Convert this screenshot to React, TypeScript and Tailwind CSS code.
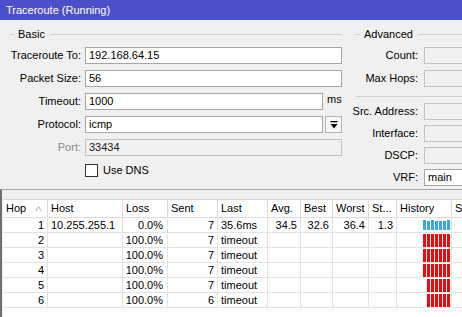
import React from "react";

const FIELD = "h-[17px] border border-[#a5a5a5] bg-white px-[3px] flex items-center leading-none";
const DIS = "h-[17px] border border-[#c3c3c3] bg-[#f0f0f0] px-[3px] flex items-center leading-none";

function Legend({ title, lineEnd = true }: { title: string; lineEnd?: boolean }) {
  return (
    <div className="h-[14px] flex items-center">
      <div className="w-[5px] ml-[5px] border-t border-[#cfcfcf]" />
      <span className="ml-[4px] leading-none">{title}</span>
      {lineEnd && <div className="flex-1 ml-[5px] border-t border-[#cfcfcf]" />}
    </div>
  );
}

function Row({ label, children, labelClass = "", labelW = "w-[77px]", gap = "ml-[4px]" }: { label: string; children: React.ReactNode; labelClass?: string; labelW?: string; gap?: string }) {
  return (
    <div className="h-[17px] flex items-center">
      <div className={`${labelW} shrink-0 text-right whitespace-nowrap leading-none ${labelClass}`}>{label}</div>
      <div className={`${gap} flex-1 min-w-0 flex items-center`}>{children}</div>
    </div>
  );
}

const COLS = "grid grid-cols-[45px_75px_45px_50px_50px_33px_32px_36px_28px_55px_40px]";

type R = { hop: string; host: string; loss: string; sent: string; last: string; avg: string; best: string; worst: string; st: string; bars: number; blue: boolean };

const rows: R[] = [
  { hop: "1", host: "10.255.255.1", loss: "0.0%", sent: "7", last: "35.6ms", avg: "34.5", best: "32.6", worst: "36.4", st: "1.3", bars: 7, blue: true },
  { hop: "2", host: "", loss: "100.0%", sent: "7", last: "timeout", avg: "", best: "", worst: "", st: "", bars: 7, blue: false },
  { hop: "3", host: "", loss: "100.0%", sent: "7", last: "timeout", avg: "", best: "", worst: "", st: "", bars: 7, blue: false },
  { hop: "4", host: "", loss: "100.0%", sent: "7", last: "timeout", avg: "", best: "", worst: "", st: "", bars: 7, blue: false },
  { hop: "5", host: "", loss: "100.0%", sent: "7", last: "timeout", avg: "", best: "", worst: "", st: "", bars: 6, blue: false },
  { hop: "6", host: "", loss: "100.0%", sent: "6", last: "timeout", avg: "", best: "", worst: "", st: "", bars: 6, blue: false },
];

const blueH = [10, 9, 10, 9, 9, 9, 10];

export default function App() {
  const cell = "h-[15px] border-r border-b border-[#e3e3e3] flex items-center leading-none whitespace-nowrap overflow-hidden";
  const hcell = "h-[18px] border-r border-b border-[#dcdcdc] flex items-center pl-[3px] leading-none whitespace-nowrap overflow-hidden";
  return (
    <div className="w-[462px] h-[317px] overflow-hidden bg-[#f0f0f0] text-[11px] text-black flex flex-col font-['Liberation_Sans',Arial,sans-serif]">
      <div className="h-[20px] shrink-0 bg-[#4b50c8] text-white flex items-center pl-[6px] leading-none">Traceroute (Running)</div>

      <div className="h-[169px] shrink-0 flex">
        {/* Basic */}
        <div className="w-[346px] shrink-0 pl-[4px] pr-[4px] pt-[7px] flex flex-col gap-[6px]">
          <Legend title="Basic" />
          <Row label="Traceroute To:">
            <div className={`${FIELD} flex-1`}>192.168.64.15</div>
          </Row>
          <Row label="Packet Size:">
            <div className={`${FIELD} flex-1`}>56</div>
          </Row>
          <Row label="Timeout:">
            <div className={`${FIELD} w-[238px]`}>1000</div>
            <span className="ml-[4px] leading-none -mt-[4px]">ms</span>
          </Row>
          <Row label="Protocol:">
            <div className={`${FIELD} w-[238px]`}>icmp</div>
            <div className="ml-[2px] w-[17px] h-[17px] border border-[#b4b4b4] bg-[#f7f7f7] flex items-center justify-center">
              <svg width="8" height="8" viewBox="0 0 8 8">
                <rect x="0.5" y="0" width="7" height="1.3" fill="#000" />
                <polygon points="0.5,3 7.5,3 4,7.5" fill="#000" />
              </svg>
            </div>
          </Row>
          <Row label="Port:" labelClass="text-[#8a8a8a]">
            <div className={`${DIS} flex-1 text-[#222]`}>33434</div>
          </Row>
          <Row label="">
            <div className="w-[13px] h-[13px] border border-[#333] bg-white" />
            <span className="ml-[5px] leading-none">Use DNS</span>
          </Row>
        </div>

        {/* Advanced */}
        <div className="ml-[4px] w-[140px] shrink-0 pt-[7px] flex flex-col">
          <Legend title="Advanced" />
          <div className="mt-[6px]">
            <Row label="Count:" labelW="w-[68px]" gap="ml-[6px]">
              <div className={`${DIS} w-[60px]`} />
            </Row>
          </div>
          <div className="mt-[6px]">
            <Row label="Max Hops:" labelW="w-[68px]" gap="ml-[6px]">
              <div className={`${DIS} w-[60px]`} />
            </Row>
          </div>
          <div className="mt-[9px] ml-[6px] border-t border-[#cfcfcf]" />
          <div className="mt-[6px]">
            <Row label="Src. Address:" labelW="w-[68px]" gap="ml-[6px]">
              <div className={`${DIS} w-[60px]`} />
            </Row>
          </div>
          <div className="mt-[5px]">
            <Row label="Interface:" labelW="w-[68px]" gap="ml-[6px]">
              <div className={`${DIS} w-[60px]`} />
            </Row>
          </div>
          <div className="mt-[5px]">
            <Row label="DSCP:" labelW="w-[68px]" gap="ml-[6px]">
              <div className={`${DIS} w-[60px]`} />
            </Row>
          </div>
          <div className="mt-[5px]">
            <Row label="VRF:" labelW="w-[68px]" gap="ml-[6px]">
              <div className={`${FIELD} w-[60px]`}>main</div>
            </Row>
          </div>
        </div>
      </div>

      {/* Table panel */}
      <div className="flex-1 min-h-0 border-t border-[#a8a8a8] border-l-2 border-l-[#6f6f6f] pt-[9px] pl-[1px] flex flex-col">
        <div className="flex-1 bg-white border-t border-[#d6d6d6] overflow-hidden">
          <div className={COLS}>
            <div className={`${hcell} justify-between pr-[5px]`}>
              <span>Hop</span>
              <svg width="7" height="6" viewBox="0 0 7 6">
                <polyline points="0.5,5.5 3.5,0.5 6.5,5.5" fill="none" stroke="#b0b0b0" strokeWidth="1" />
              </svg>
            </div>
            {["Host", "Loss", "Sent", "Last", "Avg.", "Best", "Worst", "St...", "History", "S"].map((h) => (
              <div key={h} className={hcell}>{h}</div>
            ))}
            {rows.map((r) => (
              <React.Fragment key={r.hop}>
                <div className={`${cell} justify-end pr-[3px]`}>{r.hop}</div>
                <div className={`${cell} pl-[3px]`}>{r.host}</div>
                <div className={`${cell} justify-end pr-[4px]`}>{r.loss}</div>
                <div className={`${cell} justify-end pr-[3px]`}>{r.sent}</div>
                <div className={`${cell} pl-[3px]`}>{r.last}</div>
                <div className={`${cell} justify-end pr-[3px]`}>{r.avg}</div>
                <div className={`${cell} justify-end pr-[3px]`}>{r.best}</div>
                <div className={`${cell} justify-end pr-[3px]`}>{r.worst}</div>
                <div className={`${cell} justify-end pr-[3px]`}>{r.st}</div>
                <div className={`${cell} justify-end pr-[1px] gap-[1px] ${r.blue ? "items-end pb-[2px]" : "items-start pt-[1px]"}`}>
                  {Array.from({ length: r.bars }).map((_, i) =>
                    r.blue ? (
                      <div key={i} className="w-[3px] bg-[#3aa8de]" style={{ height: blueH[i] }} />
                    ) : (
                      <div key={i} className="w-[3px] h-[13px] bg-[#ec0a0a]" />
                    )
                  )}
                </div>
                <div className={cell} />
              </React.Fragment>
            ))}
          </div>
        </div>
      </div>
    </div>
  );
}
